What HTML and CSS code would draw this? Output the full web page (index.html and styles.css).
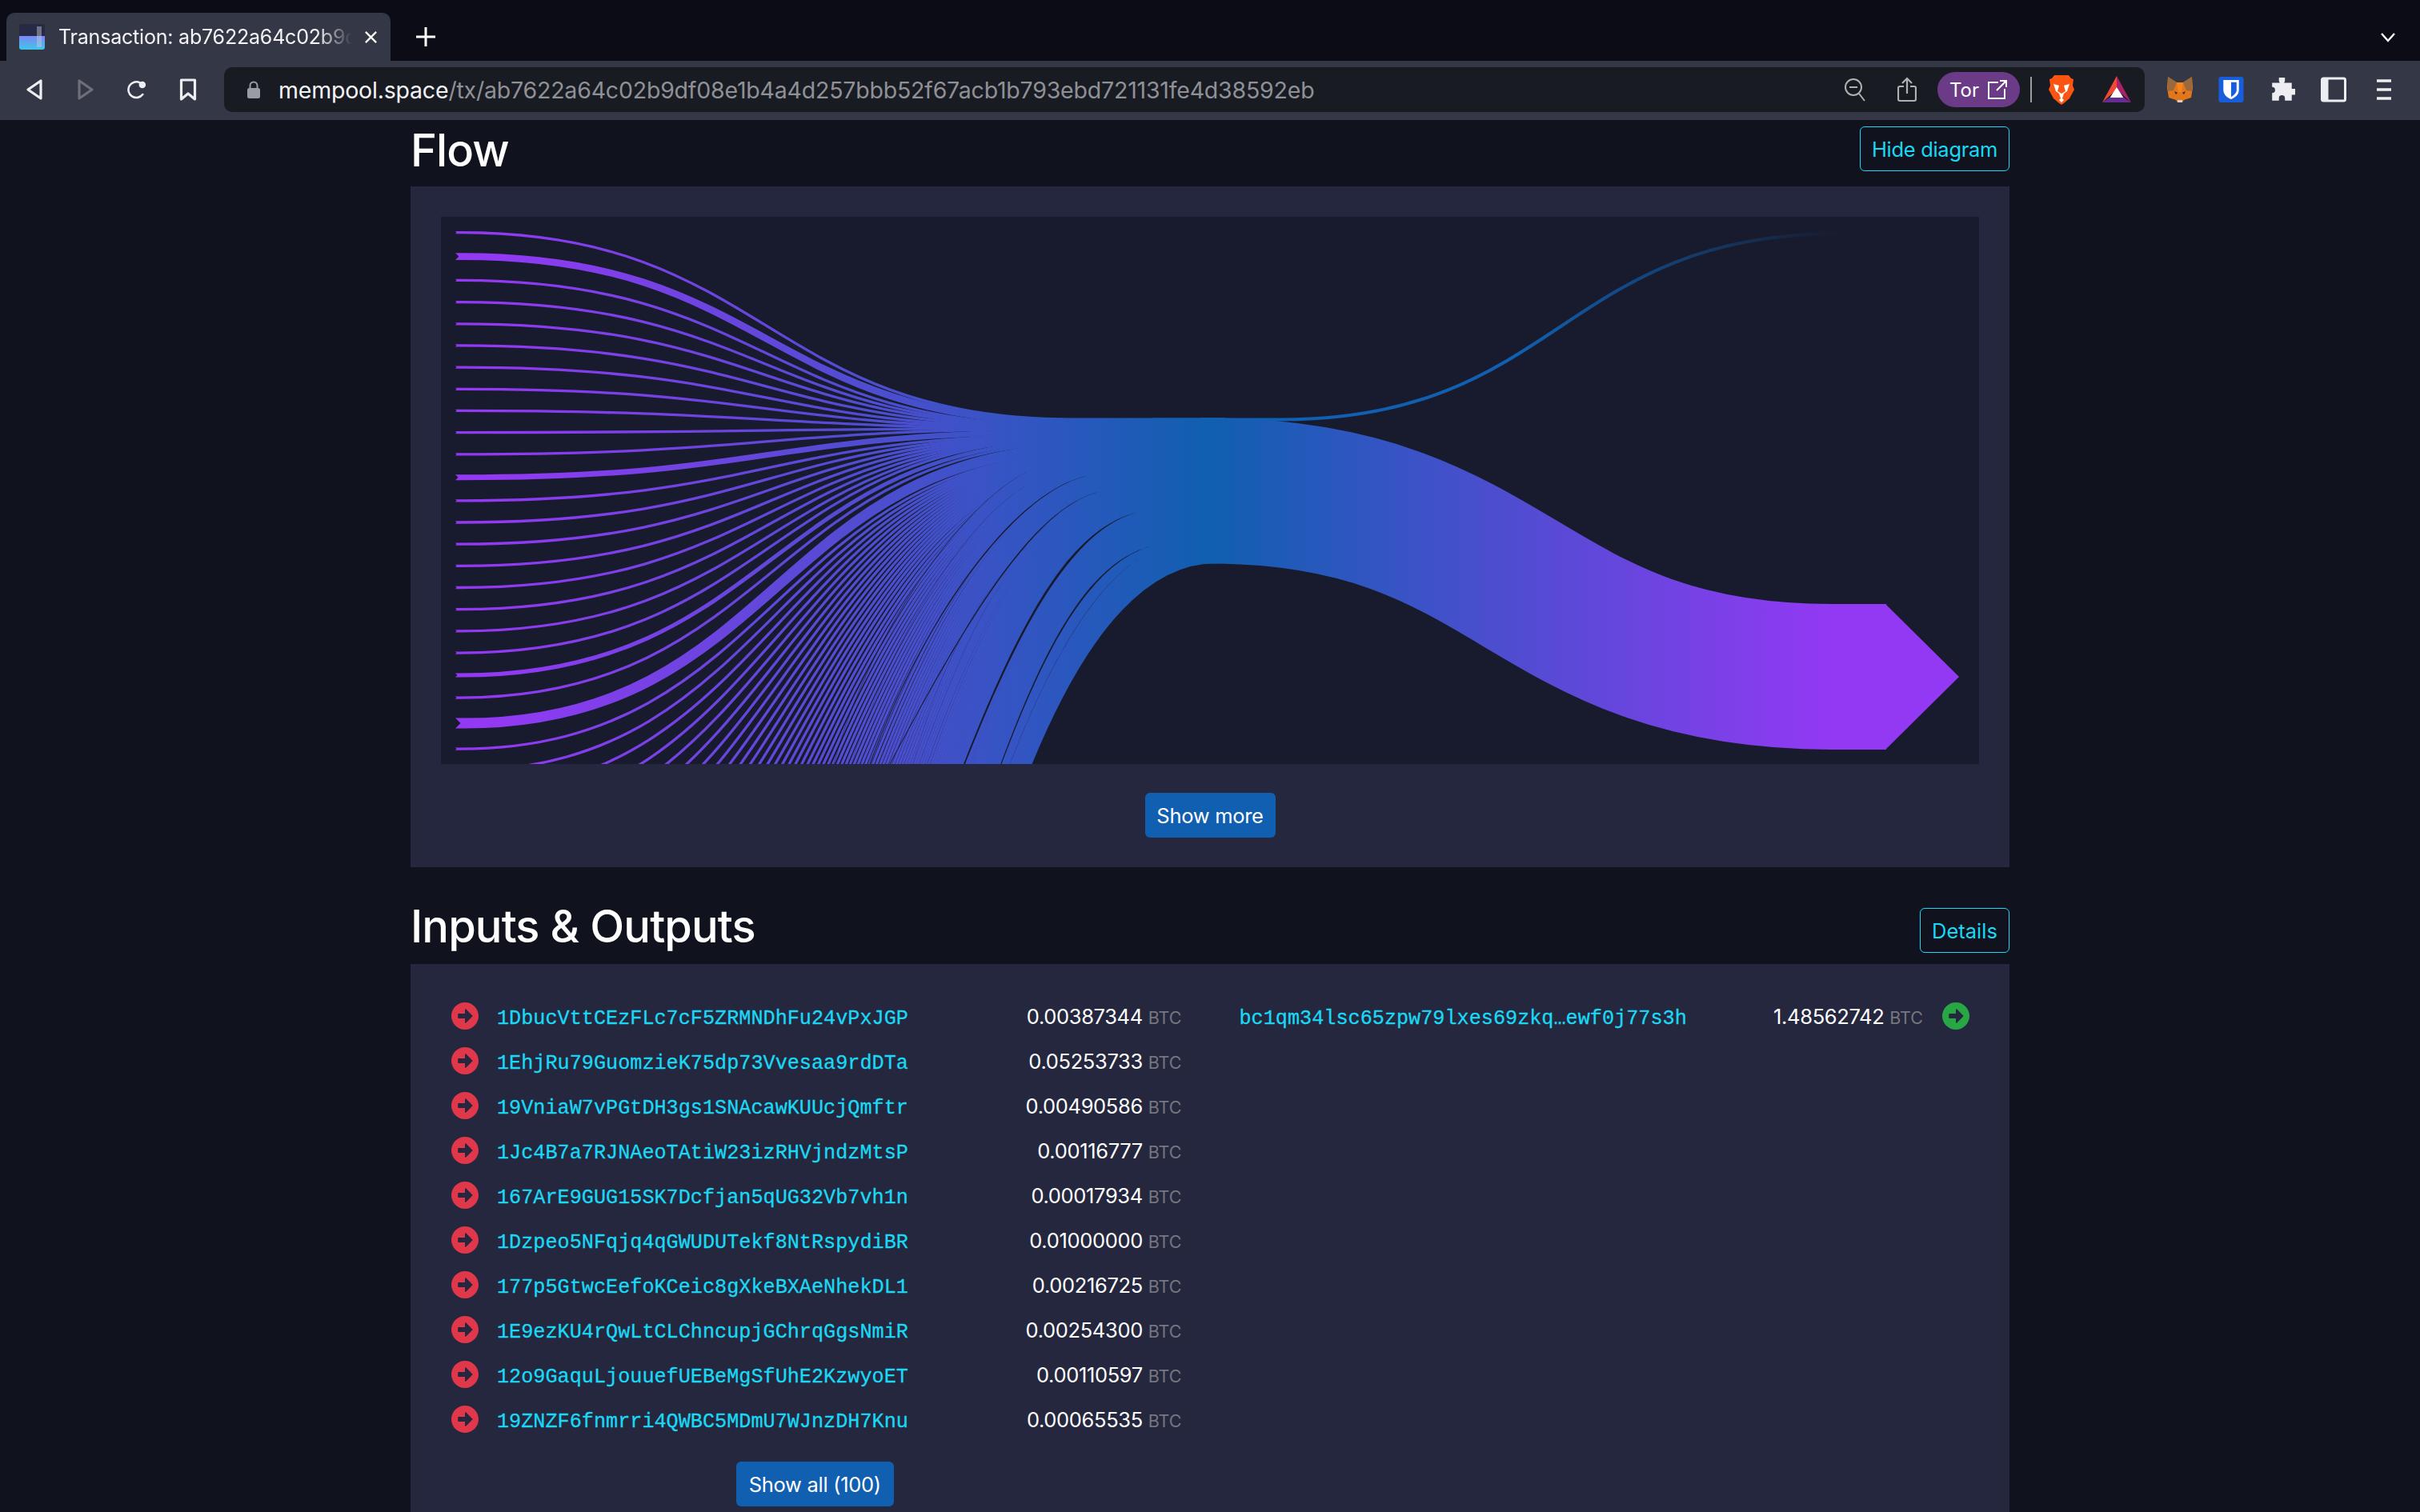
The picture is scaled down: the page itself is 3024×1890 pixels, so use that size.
FILE: index.html
```html
<!DOCTYPE html>
<html lang="en">
<head>
<meta charset="utf-8">
<title>Transaction: ab7622a64c02b9df08e1b4a4d257bbb52f67acb1b793ebd721131fe4d38592eb</title>
<link rel="stylesheet" href="styles.css">
</head>
<body>
<header class="chrome">
  <div class="tabstrip">
    <div class="tab">
      <svg class="favicon" viewBox="0 0 32 32"><defs><linearGradient id="fav" x1="0" y1="0" x2="0" y2="1"><stop offset="0" stop-color="#7d86f5"/><stop offset="1" stop-color="#3cc8ea"/></linearGradient></defs><rect width="32" height="32" rx="3" fill="#262a44"/><path d="M0 15h32v14a3 3 0 0 1-3 3H3a3 3 0 0 1-3-3z" fill="url(#fav)"/><rect x="22" y="3" width="6" height="26" fill="#c8cde0" opacity=".45"/></svg>
      <span class="tab-title">Transaction: ab7622a64c02b9d</span>
      <svg class="tab-close" viewBox="0 0 18 18"><path d="M2 2l14 14M16 2L2 16" stroke="#fff" stroke-width="2.4" fill="none"/></svg>
    </div>
    <svg class="tab-new" viewBox="0 0 24 24"><path d="M12 0v24M0 12h24" stroke="#fff" stroke-width="3" fill="none"/></svg>
    <svg class="tab-list" viewBox="0 0 18 12"><path d="M1 1l8 9 8-9" stroke="#fff" stroke-width="2.4" fill="none"/></svg>
  </div>
  <div class="toolbar">
    <div class="nav">
      <svg class="nav-icon" viewBox="0 0 24 28"><path d="M20 3v22L4 14z" stroke="#eceef2" stroke-width="3.2" stroke-linejoin="round" fill="none"/></svg>
      <svg class="nav-icon" viewBox="0 0 24 28"><path d="M4 3v22l16-11z" stroke="#6d6f79" stroke-width="3.2" stroke-linejoin="round" fill="none"/></svg>
      <svg class="nav-icon" viewBox="0 0 28 28"><path d="M22.5 21a11.5 11.5 0 1 1-4-17" stroke="#eceef2" stroke-width="3" fill="none" stroke-linecap="round"/><circle cx="22" cy="7" r="5" fill="#eceef2"/></svg>
      <svg class="nav-icon" viewBox="0 0 24 28"><path d="M3.5 2h17v24l-8.500-7-8.500 7z" stroke="#eceef2" stroke-width="3.200" stroke-linejoin="round" fill="none"/></svg>
    </div>
    <div class="omnibox">
      <svg class="lock" viewBox="0 0 18 22"><path d="M4.500 10V6a4.500 4.500 0 0 1 9 0v4" stroke="#9a9ca4" stroke-width="2" fill="none"/><rect x="1" y="9" width="16" height="13" rx="2.500" fill="#9a9ca4"/></svg>
      <div class="url"><span class="url-host">mempool.space</span>/tx/ab7622a64c02b9df08e1b4a4d257bbb52f67acb1b793ebd721131fe4d38592eb</div>
      <svg class="omni-icon zoom-out" viewBox="0 0 28 30"><circle cx="12" cy="12" r="10" stroke="#b0b1b6" stroke-width="2" fill="none"/><path d="M7 12h10M19 20l7 9" stroke="#b0b1b6" stroke-width="2" fill="none"/></svg>
      <svg class="omni-icon share" viewBox="0 0 24 32"><path d="M8 12H3a2 2 0 0 0-2 2v14a2 2 0 0 0 2 2h18a2 2 0 0 0 2-2V14a2 2 0 0 0-2-2h-5M12 21V2M6 8l6-6 6 6" stroke="#b0b1b6" stroke-width="2.200" fill="none"/></svg>
      <div class="tor-pill">
        <span class="tor-label">Tor</span>
        <svg class="tor-link" viewBox="0 0 26 24"><path d="M14 3H2v20h20V11M12 13L24 1M16 1h8v8" stroke="#fff" stroke-width="2" fill="none"/></svg>
      </div>
      <span class="omni-sep"></span>
      <svg class="brave" viewBox="0 0 32 38"><path d="M7 1h18l3 4 3 1-1 8 2 5-6 11-7 6-3 2-3-2-7-6L0 19l2-5-1-8 3-1z" fill="#fb5511"/><path d="M6 12l7 2-2 7 5 3 5-3-2-7 7-2-3 9-4 3-2 6 2 2-3 3-3-3 2-2-2-6-4-3z" fill="#fff"/></svg>
      <svg class="bat" viewBox="0 0 36 34"><path d="M18 0v17L0 33z" fill="#f04832"/><path d="M18 0l18 33-18-16z" fill="#a8226a"/><path d="M18 14l9 14H9z" fill="#fff"/><path d="M0 33l9-6h18l9 6z" fill="#662d91"/></svg>
    </div>
    <div class="extensions">
      <svg class="ext fox" viewBox="0 0 32 32"><path d="M1 0l11 7h8L31 0l1 14-2 12-9 3-2 3h-6l-2-3-9-3-2-12z" fill="#e2761b"/><path d="M1 0l11 7-4 10-7 1zM31 0L20 7l4 10 7 1z" fill="#9a6a3d"/><path d="M12 7h8l-2 12h-4z" fill="#f6851b"/><path d="M9 18l4 2-2 2zM23 18l-4 2 2 2z" fill="#2a2a2a"/><path d="M13 29h6v3h-6z" fill="#d7d0c8"/></svg>
      <svg class="ext" viewBox="0 0 32 33"><rect width="32" height="33" rx="3" fill="#175ddc"/><path d="M6 4h20v13c0 6-5 10-10 12-5-2-10-6-10-12z" fill="#fff"/><path d="M16 7h7v10c0 4-4 7-7 9z" fill="#175ddc"/></svg>
      <svg class="ext" viewBox="0 0 30 30"><path d="M11 1h7v4l-1 2h9v7h3a3.500 3.500 0 0 1 0 7h-3v7h-8v-3a3.500 3.500 0 0 0-7 0v3H3v-9a3.500 3.500 0 0 0 0-7V7h9l-1-2z" fill="#eceef2"/></svg>
      <svg class="ext" viewBox="0 0 32 31"><rect x="1.500" y="1.500" width="29" height="28" rx="2" stroke="#eceef2" stroke-width="3" fill="none"/><rect x="1.500" y="1.500" width="8" height="28" fill="#eceef2"/></svg>
      <svg class="ext menu" viewBox="0 0 18 26"><path d="M0 2h18M0 13h18M0 24h18" stroke="#eceef2" stroke-width="3.600" fill="none"/></svg>
    </div>
  </div>
</header>

<main class="container">
  <section class="section-flow">
    <div class="title-row flow-row">
      <h2 class="title">Flow</h2>
      <button class="btn-outline hide-btn">Hide diagram</button>
    </div>
    <div class="box flow-box">
      <div class="diagram">
        <svg id="bowtie" class="bowtie" viewBox="551 271 1922 684" preserveAspectRatio="none">
          <defs>
            <linearGradient id="inGrad" gradientUnits="userSpaceOnUse" x1="620" y1="0" x2="1512" y2="0"><stop offset="0" stop-color="#9339f4"/><stop offset="1" stop-color="#105fb0"/></linearGradient>
            <linearGradient id="outGrad" gradientUnits="userSpaceOnUse" x1="1512" y1="0" x2="2290" y2="0"><stop offset="0" stop-color="#105fb0"/><stop offset="1" stop-color="#9339f4"/></linearGradient>
            <linearGradient id="feeGrad" gradientUnits="userSpaceOnUse" x1="1900" y1="0" x2="2300" y2="0"><stop offset="0" stop-color="#105fb0"/><stop offset="1" stop-color="#105fb0" stop-opacity="0"/></linearGradient>
          </defs>
          <g id="inputs"></g>
          <path class="strand fee" d="M1500 524.500L1600 524.500C1950 524.500 1950 292 2300 292L2440 292"/>
          <path class="strand main" d="M1500 613.500L1510 613.500C1900 613.500 1900 846 2290 846L2357 846"/>
          <path class="arrow-tip" d="M2356 755L2448 846L2356 937Z"/>
        </svg>
      </div>
      <div class="center-btn"><button class="btn-primary">Show more</button></div>
    </div>
  </section>

  <section class="section-io">
    <div class="title-row io-row">
      <h2 class="title">Inputs &amp; Outputs</h2>
      <button class="btn-outline details-btn">Details</button>
    </div>
    <div class="box io-box">
      <div class="io-grid">
        <div class="io-col">
          <div class="io-row-item"><svg class="dir in" viewBox="8 8 496 496"><use href="#arrow-c"/></svg><a class="addr">1DbucVttCEzFLc7cF5ZRMNDhFu24vPxJGP</a><span class="amount">0.00387344 <span class="unit">BTC</span></span></div>
          <div class="io-row-item"><svg class="dir in" viewBox="8 8 496 496"><use href="#arrow-c"/></svg><a class="addr">1EhjRu79GuomzieK75dp73Vvesaa9rdDTa</a><span class="amount">0.05253733 <span class="unit">BTC</span></span></div>
          <div class="io-row-item"><svg class="dir in" viewBox="8 8 496 496"><use href="#arrow-c"/></svg><a class="addr">19VniaW7vPGtDH3gs1SNAcawKUUcjQmftr</a><span class="amount">0.00490586 <span class="unit">BTC</span></span></div>
          <div class="io-row-item"><svg class="dir in" viewBox="8 8 496 496"><use href="#arrow-c"/></svg><a class="addr">1Jc4B7a7RJNAeoTAtiW23izRHVjndzMtsP</a><span class="amount">0.00116777 <span class="unit">BTC</span></span></div>
          <div class="io-row-item"><svg class="dir in" viewBox="8 8 496 496"><use href="#arrow-c"/></svg><a class="addr">167ArE9GUG15SK7Dcfjan5qUG32Vb7vh1n</a><span class="amount">0.00017934 <span class="unit">BTC</span></span></div>
          <div class="io-row-item"><svg class="dir in" viewBox="8 8 496 496"><use href="#arrow-c"/></svg><a class="addr">1Dzpeo5NFqjq4qGWUDUTekf8NtRspydiBR</a><span class="amount">0.01000000 <span class="unit">BTC</span></span></div>
          <div class="io-row-item"><svg class="dir in" viewBox="8 8 496 496"><use href="#arrow-c"/></svg><a class="addr">177p5GtwcEefoKCeic8gXkeBXAeNhekDL1</a><span class="amount">0.00216725 <span class="unit">BTC</span></span></div>
          <div class="io-row-item"><svg class="dir in" viewBox="8 8 496 496"><use href="#arrow-c"/></svg><a class="addr">1E9ezKU4rQwLtCLChncupjGChrqGgsNmiR</a><span class="amount">0.00254300 <span class="unit">BTC</span></span></div>
          <div class="io-row-item"><svg class="dir in" viewBox="8 8 496 496"><use href="#arrow-c"/></svg><a class="addr">12o9GaquLjouuefUEBeMgSfUhE2KzwyoET</a><span class="amount">0.00110597 <span class="unit">BTC</span></span></div>
          <div class="io-row-item"><svg class="dir in" viewBox="8 8 496 496"><use href="#arrow-c"/></svg><a class="addr">19ZNZF6fnmrri4QWBC5MDmU7WJnzDH7Knu</a><span class="amount">0.00065535 <span class="unit">BTC</span></span></div>
          <div class="center-btn show-all"><button class="btn-primary">Show all (100)</button></div>
        </div>
        <div class="io-col">
          <div class="io-row-item"><a class="addr">bc1qm34lsc65zpw79lxes69zkq…ewf0j77s3h</a><span class="amount">1.48562742 <span class="unit">BTC</span></span><svg class="dir out" viewBox="8 8 496 496"><use href="#arrow-c"/></svg></div>
        </div>
      </div>
    </div>
  </section>
</main>
<svg class="sprite" width="0" height="0"><defs><path id="arrow-c" fill="currentColor" d="M256 8c137 0 248 111 248 248S393 504 256 504 8 393 8 256 119 8 256 8zM140 300h116v70.900c0 10.700 13 16.100 20.500 8.500l114.300-114.900c4.700-4.700 4.700-12.200 0-16.900l-114.300-115c-7.600-7.600-20.500-2.200-20.500 8.500V212H140c-6.600 0-12 5.400-12 12v64c0 6.600 5.400 12 12 12z"/></defs></svg>
<script src="script.js"></script>
</body>
</html>
```
FILE: styles.css
```css
* { box-sizing: border-box; }
html, body { margin: 0; height: 100%; overflow: hidden; }
body { background: #10121e; color: #fff; font-family: Inter, "Liberation Sans", sans-serif; }

.chrome { display: flex; flex-direction: column; }
.tabstrip { height: 76px; background: #0b0c15; display: flex; align-items: flex-end; padding-left: 8px; position: relative; }
.tab { width: 480px; height: 60px; background: #343746; border-radius: 10px 10px 0 0; display: flex; align-items: center; padding: 0 16px 0 16px; }
.favicon { width: 32px; height: 32px; flex: none; }
.tab-title { flex: 1; min-width: 0; margin-left: 17px; font-size: 25px; color: #f4f4f6; white-space: nowrap; letter-spacing: -.2px;
  -webkit-mask-image: linear-gradient(90deg, #000 88%, transparent 100%); mask-image: linear-gradient(90deg, #000 88%, transparent 100%); }
.tab-close { width: 17px; height: 17px; margin-left: 15px; flex: none; }
.tab-new { width: 24px; height: 24px; margin: 0 0 18px 32px; flex: none; }
.tab-list { position: absolute; left: 2975px; top: 41px; width: 18px; height: 12px; }

.toolbar { height: 74px; background: #343746; display: flex; align-items: flex-start; padding-top: 8px; }
.nav { width: 280px; height: 56px; display: flex; align-items: center; flex: none; padding-left: 31px; }
.nav-icon { width: 24px; height: 28px; margin-right: 40px; flex: none; }
.omnibox { width: 2400px; height: 56px; background: #191b23; border-radius: 10px; display: flex; align-items: center; flex: none; padding-left: 28px; }
.lock { width: 18px; height: 22px; flex: none; }
.url { flex: 1; margin-left: 22px; font-size: 28.5px; color: #8f9197; white-space: nowrap; letter-spacing: -.2px; }
.url-host { color: #f4f4f6; }
.omni-icon { flex: none; }
.zoom-out { width: 28px; height: 30px; }
.share { width: 24px; height: 32px; margin-left: 39px; }
.tor-pill { width: 103px; height: 44px; margin-left: 26px; border-radius: 22px; background: #6b3b88; display: flex; align-items: center; padding-left: 15px; flex: none; }
.tor-label { font-size: 24px; color: #fff; width: 47px; }
.tor-link { width: 26px; height: 24px; margin-left: 0; }
.omni-sep { width: 2px; height: 32px; background: #9c9da3; margin-left: 13px; flex: none; }
.brave { width: 32px; height: 38px; margin-left: 21px; flex: none; }
.bat { width: 36px; height: 34px; margin-left: 35px; margin-right: 17px; flex: none; }
.extensions { display: flex; align-items: center; height: 56px; padding-left: 28px; }
.ext { width: 32px; height: 32px; margin-right: 32px; flex: none; }
.menu { width: 18px; height: 26px; margin-left: 6px; }

.container { width: 1998px; margin: 0 auto; }
.title-row { display: flex; justify-content: space-between; align-items: center; }
.title { margin: 0; font-size: 56px; font-weight: 500; letter-spacing: -.9px; line-height: 56px; }
.flow-row { height: 64px; padding-top: 8px; margin-bottom: 19px; }
.flow-row .title { margin-top: 3px; }
.io-row { height: 56px; margin-top: 51px; margin-bottom: 14px; }
.io-row .title { margin-top: -10px; }
.btn-outline { height: 56px; background: transparent; border: 1.5px solid #1bd8f4; border-radius: 6px; color: #1bd8f4; font: 400 25.500px Inter, "Liberation Sans", sans-serif; padding: 0; white-space: nowrap; }
.hide-btn { width: 187px; letter-spacing: -.3px; }
.details-btn { width: 112px; }
.btn-primary { height: 57px; padding: 0; background: #105fb0; border: 0; border-radius: 6px; color: #fff; font: 400 25.500px Inter, "Liberation Sans", sans-serif; white-space: nowrap; letter-spacing: -.3px; }

.box { background: #24273e; }
.flow-box { padding: 38px 38px 37px; }
.diagram { height: 684px; background: #181b2d; }
.bowtie { display: block; width: 100%; height: 100%; }
.strand { fill: none; }
.fee { stroke: url(#feeGrad); stroke-width: 4; }
.main { stroke: url(#outGrad); stroke-width: 182; }
.arrow-tip { fill: #9339f4; }
.center-btn { display: flex; justify-content: center; margin-top: 36px; }
.flow-box .btn-primary { width: 163px; height: 56px; }

.io-box { padding: 38px 50px 60px 51px; }
.io-grid { display: grid; grid-template-columns: 1fr 1fr; column-gap: 72px; align-items: start; }
.io-row-item { height: 56px; display: flex; align-items: center; }
.dir { width: 34px; height: 34px; flex: none; margin-top: -2px; }
.dir.in { color: #e0374a; margin-right: 23px; }
.dir.out { color: #28a745; margin-left: 24px; }
.addr { flex: 1; font: 400 25.200px "Liberation Mono", monospace; color: #1bd8f4; white-space: nowrap; -webkit-text-stroke: .3px #1bd8f4; padding-top: 4px; }
.amount { font-size: 25.500px; color: #fff; white-space: nowrap; margin-top: -2px; letter-spacing: -.35px; }
.unit { font-size: 21.500px; color: #75777f; margin-left: 0; letter-spacing: 0; }
.show-all { margin-top: 24px; padding-right: 4px; }
.show-all .btn-primary { width: 197px; height: 56px; }
.sprite { position: absolute; }
```
FILE: script.js
```js
// Builds the transaction "bowtie": one stroked strand per input, stacked in the middle.
(function () {
  var NS = 'http://www.w3.org/2000/svg';
  var group = document.getElementById('inputs');
  var weights = [.64, 8.7, .8, .2, .05, 1.66, .36, .42, .18, .11, 1, 7, .5, .5, .5, .5, .5, .5, .5, .5, 5, .5, 13, .5];
  for (var n = 0; n < 71; n++) weights.push(n % 17 === 16 ? 1.2 : .38);
  weights.push(21, 26, 42, 10, 11);
  var MIN = 3.3, GAP = 23.87, LEFT = 569, END = 1530, TOP = 522.5, BOTTOM = 704, W = 900;
  var TAIL_SCALE = 0.25, THIN_STEP = 1.55;
  var lastOuter = 289.05, lastInner = TOP, lastWeight = 0, offset = 0, minOffset = 0;
  var lines = weights.map(function (w, i) {
    var t = Math.max(MIN, w);
    var outerY = lastOuter + t / 2;
    var innerY = Math.min(BOTTOM - t / 2, Math.max(TOP + t / 2, lastInner + w / 2));
    lastOuter += t + GAP;
    lastInner += w;
    var dist = (lastWeight + w) / 2;
    var a = Math.atan2(1.5 * (innerY - outerY), 0.75 * W);
    var scale = i >= 95 ? TAIL_SCALE : 1;
    if (Math.sin(a) !== 0) offset += scale * Math.max(Math.min(dist * (1 - Math.cos(a)) / Math.sin(a), dist), -dist);
    if (i >= 10 && i < 95) offset -= THIN_STEP;
    minOffset = Math.min(minOffset, offset);
    lastWeight = w;
    return { t: t, outerY: outerY, innerY: innerY, offset: offset };
  });
  lines.forEach(function (l) {
    var curveStart = LEFT + l.t / 2 + 5;
    var curveEnd = END - (l.offset - minOffset) - 10;
    var mid = (curveStart + curveEnd) / 2;
    var p = document.createElementNS(NS, 'path');
    p.setAttribute('d', 'M' + LEFT + ' ' + l.outerY + 'L' + curveStart + ' ' + l.outerY +
      'C' + mid + ' ' + l.outerY + ' ' + mid + ' ' + l.innerY + ' ' + curveEnd + ' ' + l.innerY + 'L' + END + ' ' + l.innerY);
    p.setAttribute('fill', 'none');
    p.setAttribute('stroke', 'url(#inGrad)');
    p.setAttribute('stroke-width', l.t);
    group.appendChild(p);
    var n = document.createElementNS(NS, 'path');
    n.setAttribute('d', 'M' + LEFT + ' ' + (l.outerY - l.t / 2) + 'L' + (LEFT + l.t / 2) + ' ' + l.outerY + 'L' + LEFT + ' ' + (l.outerY + l.t / 2) + 'Z');
    n.setAttribute('fill', '#181b2d');
    group.appendChild(n);
  });

  // The solid middle of the stack, where all strands have merged.
  var core = document.createElementNS(NS, 'rect');
  core.setAttribute('x', 1440);
  core.setAttribute('y', TOP);
  core.setAttribute('width', END - 1440);
  core.setAttribute('height', BOTTOM - TOP);
  core.setAttribute('fill', 'url(#inGrad)');
  group.appendChild(core);

  // Tapered slivers of background between the large strands: tip, two controls, end.
  var slivers = [
    { w: 2, o: 1, p: [1437, 683, 1360, 705, 1305, 810, 1251, 955] },
    { w: .5, o: .6, p: [1433, 693, 1370, 725, 1310, 830, 1262, 955] },
    { w: 3, o: 1, p: [1420, 641, 1335, 662, 1270, 790, 1205, 955] },
    { w: 1.5, o: 1, p: [1373, 615, 1290, 635, 1205, 780, 1112, 955] },
    { w: 1.5, o: 1, p: [1363, 594, 1270, 610, 1155, 770, 1087, 955] },
    { w: .9, o: .8, p: [1288, 588, 1210, 620, 1085, 790, 1042, 955] },
    { w: .5, o: .6, p: [1290, 603, 1215, 640, 1115, 790, 1064, 955] },
    { w: .4, o: .6, p: [1283, 683, 1225, 740, 1175, 830, 1141, 955] },
    { w: .4, o: .5, p: [1260, 720, 1225, 760, 1190, 840, 1149, 955] }
  ];
  function bez(a, b, c, d, s) {
    var r = 1 - s;
    return r * r * r * a + 3 * r * r * s * b + 3 * r * s * s * c + s * s * s * d;
  }
  slivers.forEach(function (sl) {
    var q = sl.p, left = [], right = [], total = 60;
    for (var k = 0; k <= total; k++) {
      var f = k / total, e = .001;
      var x = bez(q[0], q[2], q[4], q[6], f), y = bez(q[1], q[3], q[5], q[7], f);
      var dx = bez(q[0], q[2], q[4], q[6], f + e) - x, dy = bez(q[1], q[3], q[5], q[7], f + e) - y;
      var len = Math.hypot(dx, dy) || 1;
      var half = sl.w * (f < .35 ? f / .35 : 1 - (f - .35) * .6) / 2;
      left.push((x - dy / len * half).toFixed(2) + ' ' + (y + dx / len * half).toFixed(2));
      right.unshift((x + dy / len * half).toFixed(2) + ' ' + (y - dx / len * half).toFixed(2));
    }
    var path = document.createElementNS(NS, 'path');
    path.setAttribute('d', 'M' + left.concat(right).join('L') + 'Z');
    path.setAttribute('fill', '#181b2d');
    path.setAttribute('fill-opacity', sl.o);
    group.appendChild(path);
  });
})();
```
